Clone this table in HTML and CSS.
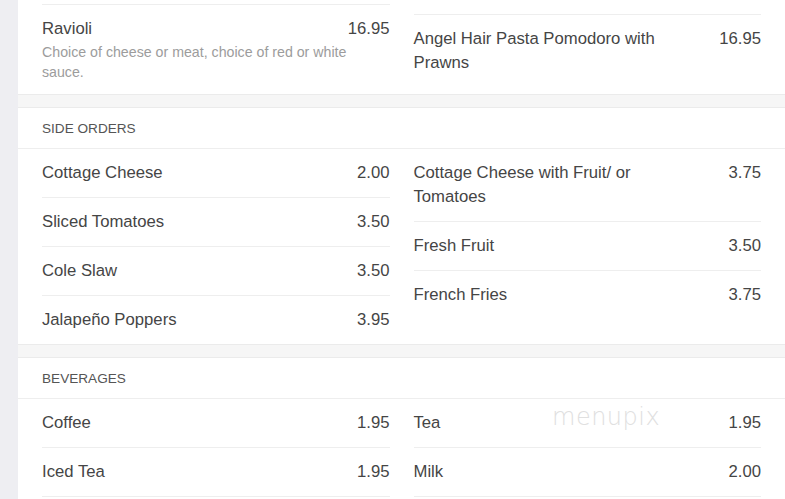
FILE: index.html
```html
<!DOCTYPE html>
<html>
<head>
<meta charset="utf-8">
<link rel="stylesheet" href="styles.css">
</head>
<body>
<div class="page">
  <section class="card card-first">
    <div class="cols">
      <div class="col col-left-top">
        <div class="row">
          <div class="line"><span class="name">Ravioli</span><span class="price">16.95</span></div>
          <div class="desc">Choice of cheese or meat, choice of red or white sauce.</div>
        </div>
      </div>
      <div class="col col-right-top">
        <div class="row">
          <div class="line"><span class="name">Angel Hair Pasta Pomodoro with Prawns</span><span class="price">16.95</span></div>
        </div>
      </div>
    </div>
  </section>

  <section class="card">
    <h2 class="head">SIDE ORDERS</h2>
    <div class="cols">
      <div class="col">
        <div class="row"><div class="line"><span class="name">Cottage Cheese</span><span class="price">2.00</span></div></div>
        <div class="row"><div class="line"><span class="name">Sliced Tomatoes</span><span class="price">3.50</span></div></div>
        <div class="row"><div class="line"><span class="name">Cole Slaw</span><span class="price">3.50</span></div></div>
        <div class="row"><div class="line"><span class="name">Jalapeño Poppers</span><span class="price">3.95</span></div></div>
      </div>
      <div class="col">
        <div class="row"><div class="line"><span class="name">Cottage Cheese with Fruit/ or Tomatoes</span><span class="price">3.75</span></div></div>
        <div class="row"><div class="line"><span class="name">Fresh Fruit</span><span class="price">3.50</span></div></div>
        <div class="row"><div class="line"><span class="name">French Fries</span><span class="price">3.75</span></div></div>
      </div>
    </div>
  </section>

  <section class="card card-last">
    <h2 class="head">BEVERAGES</h2>
    <div class="cols">
      <div class="col col-more">
        <div class="row"><div class="line"><span class="name">Coffee</span><span class="price">1.95</span></div></div>
        <div class="row"><div class="line"><span class="name">Iced Tea</span><span class="price">1.95</span></div></div>
      </div>
      <div class="col col-more">
        <div class="row"><div class="line"><span class="name">Tea</span><span class="price">1.95</span></div></div>
        <div class="row"><div class="line"><span class="name">Milk</span><span class="price">2.00</span></div></div>
      </div>
    </div>
    <div class="watermark">menupix</div>
  </section>
</div>
</body>
</html>
```

FILE: styles.css
```css
html, body {
  margin: 0;
  padding: 0;
}
body {
  background: #eeeef2;
  font-family: "Liberation Sans", Arial, sans-serif;
  color: #444;
  height: 499px;
  overflow: hidden;
}
.page {
  margin-left: 18px;
  background: #f6f6f6;
  display: flex;
  flex-direction: column;
  gap: 12px;
}
.card {
  position: relative;
  background: #fff;
  border-top: 1px solid #ebebeb;
  border-bottom: 1px solid #ebebeb;
}
.card-first {
  border-top: none;
}
.card-last {
  padding-bottom: 60px;
}
.head {
  margin: 0;
  padding: 13px 24px 11px;
  font-size: 13.6px;
  line-height: 16px;
  font-weight: normal;
  color: #555;
  border-bottom: 1px solid #eee;
}
.cols {
  display: grid;
  grid-template-columns: 1fr 1fr;
  column-gap: 24px;
  padding: 0 24px;
}
.col-left-top {
  padding-top: 4px;
}
.col-right-top {
  padding-top: 14px;
}
.col-left-top .row,
.col-right-top .row {
  border-top: 1px solid #eee;
}
.row {
  padding: 12px 0;
  border-bottom: 1px solid #eee;
}
.col .row:last-child {
  border-bottom: none;
}
.col-more .row:last-child {
  border-bottom: 1px solid #eee;
}
.line {
  display: flex;
  justify-content: space-between;
  align-items: flex-start;
  gap: 24px;
  font-size: 16.7px;
  line-height: 24px;
}
.name {
  color: #454545;
}
.price {
  color: #454545;
  white-space: nowrap;
}
.desc {
  padding-top: 1px;
  font-size: 14.2px;
  line-height: 20px;
  color: #9c9c9c;
  padding-right: 40px;
}
.watermark {
  position: absolute;
  left: 534px;
  top: 45px;
  font-family: "DejaVu Sans", sans-serif;
  font-size: 24px;
  font-weight: 200;
  letter-spacing: 0.5px;
  color: #e0e0e0;
}
```
